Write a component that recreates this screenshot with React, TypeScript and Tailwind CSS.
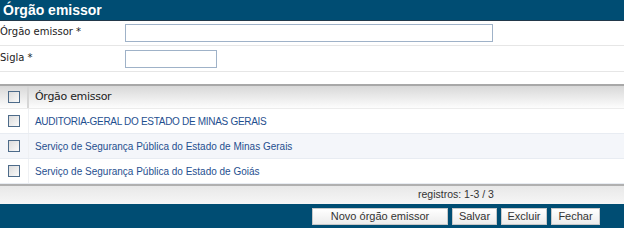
import React from "react";

const rows = [
  "AUDITORIA-GERAL DO ESTADO DE MINAS GERAIS",
  "Serviço de Segurança Pública do Estado de Minas Gerais",
  "Serviço de Segurança Pública do Estado de Goiás",
];

function Check() {
  return (
    <span className="block w-[12px] h-[12px] border border-[#4d6b8a] bg-gradient-to-br from-[#dcdcdc] to-[#fafafa]" />
  );
}

export default function App() {
  return (
    <div className="w-[624px] h-[228px] bg-white overflow-hidden font-['Liberation_Sans',Arial,sans-serif] text-[11px] flex flex-col">
      {/* Title bar */}
      <div className="h-[21px] bg-[#004d73] border-b border-[#22384a] flex items-center px-[3px]">
        <h1 className="text-white font-bold text-[14px] leading-none">
          Órgão emissor
        </h1>
      </div>

      {/* Form */}
      <div className="font-['DejaVu_Sans',sans-serif] text-[10px] text-[#222]">
        <div className="h-[25px] flex items-center border-b border-[#e6e6e6] pb-[3px]">
          <label className="w-[125px]">Órgão emissor *</label>
          <input className="w-[368px] h-[18px] mt-[3px] border border-[#9fb2c8] bg-white outline-none" />
        </div>
        <div className="h-[26px] flex items-center border-b border-[#e6e6e6] pb-[3px]">
          <label className="w-[125px]">Sigla *</label>
          <input className="w-[92px] h-[18px] mt-[3px] border border-[#9fb2c8] bg-white outline-none" />
        </div>
      </div>

      <div className="h-[12px]" />

      {/* Table */}
      <div className="border-t-2 border-[#a8a8a8]">
        <div className="h-[23px] flex items-center bg-gradient-to-b from-[#d8d8d8] to-[#fdfdfd] border-b border-[#ececec]">
          <div className="w-[29px] h-full flex items-center justify-center border-r-2 border-[#d6d6d6]">
            <Check />
          </div>
          <span className="pl-[6px] text-[11px] text-[#222] font-['DejaVu_Sans',sans-serif] tracking-[-0.3px]">
            Órgão emissor
          </span>
        </div>
        {rows.map((r, i) => (
          <div
            key={r}
            className={`h-[25px] flex items-center border-b border-[#e8ecf2] ${i === 1 ? "bg-[#f4f6fa]" : "bg-white"}`}
          >
            <div className="w-[29px] h-full flex items-center justify-center border-r border-[#eef0f3]">
              <Check />
            </div>
            <span className={`pl-[6px] text-[10px] text-[#1f4f8f] ${i === 0 ? "tracking-[-0.3px]" : ""}`}>{r}</span>
          </div>
        ))}
      </div>

      {/* Pager */}
      <div className="h-[20px] border-t-2 border-[#b0b0b0] bg-gradient-to-b from-[#e8e8e8] to-[#f6f6f6] flex items-center pl-[418px] text-[10.5px] text-[#333]">
        registros: 1-3 / 3
      </div>

      {/* Button bar */}
      <div className="flex-1 bg-[#004d73] flex items-center justify-end pr-[24px] gap-[4px]">
        <button className="w-[136px] h-[17px] bg-gradient-to-b from-white to-[#ececec] border border-[#c8c8c8] text-[11px] text-[#333] leading-none">
          Novo órgão emissor
        </button>
        <button className="w-[45px] h-[17px] bg-gradient-to-b from-white to-[#ececec] border border-[#c8c8c8] text-[11px] text-[#333] leading-none">
          Salvar
        </button>
        <button className="w-[46px] h-[17px] bg-gradient-to-b from-white to-[#ececec] border border-[#c8c8c8] text-[11px] text-[#333] leading-none">
          Excluir
        </button>
        <button className="w-[49px] h-[17px] bg-gradient-to-b from-white to-[#ececec] border border-[#c8c8c8] text-[11px] text-[#333] leading-none">
          Fechar
        </button>
      </div>
    </div>
  );
}
